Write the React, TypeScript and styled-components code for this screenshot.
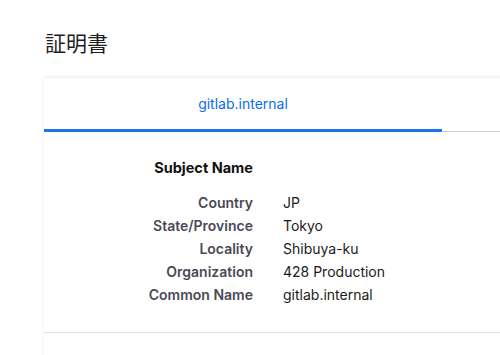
import React from 'react';
import styled, { createGlobalStyle } from 'styled-components';

const GlobalStyle = createGlobalStyle`
  html, body {
    margin: 0;
    padding: 0;
    background: #ffffff;
    overflow: hidden;
    font-family: Inter, "Noto Sans", "Noto Sans CJK JP", sans-serif;
    -webkit-font-smoothing: antialiased;
  }
`;

const Page = styled.div`
  padding: 29px 0 0 44px;
  width: 456px;
  height: 326px;
  overflow: hidden;
`;

const Title = styled.h1`
  margin: 0 0 22px 1px;
  font-family: "Noto Sans CJK JP", "Noto Sans", sans-serif;
  font-size: 21px;
  font-weight: 400;
  line-height: 26px;
  color: #1e1e1e;
`;

const Card = styled.div`
  width: 520px;
  height: 300px;
  background: #ffffff;
  box-shadow: 0 0 3px rgba(0, 0, 0, 0.08);
  border-top: 1px solid #f4f4f4;
`;

const TabBar = styled.div`
  display: flex;
  height: 53px;
  border-bottom: 1px solid #d0d0d0;
`;

const Tab = styled.div<{ $active?: boolean }>`
  width: 398px;
  display: flex;
  align-items: center;
  justify-content: center;
  font-size: 14px;
  color: #0a6cf0;
  margin-bottom: -1px;
  border-bottom: 3px solid ${p => (p.$active ? '#1a73f0' : 'transparent')};
`;

const Body = styled.div`
  padding: 26px 0 28px;
  border-bottom: 1px solid #e0e0e0;
`;

const Grid = styled.div`
  display: grid;
  grid-template-columns: 209px auto;
  column-gap: 30px;
  row-gap: 4px;
  font-size: 14px;
  line-height: 19px;
`;

const Heading = styled.div`
  text-align: right;
  font-weight: 700;
  font-size: 14.5px;
  color: #111111;
  margin-bottom: 12px;
`;

const Label = styled.div`
  text-align: right;
  font-weight: 600;
  color: #4a4a55;
`;

const Value = styled.div`
  color: #1a1a1a;
`;

const rows: [string, string][] = [
  ['Country', 'JP'],
  ['State/Province', 'Tokyo'],
  ['Locality', 'Shibuya-ku'],
  ['Organization', '428 Production'],
  ['Common Name', 'gitlab.internal'],
];

export default function App() {
  return (
    <Page>
      <GlobalStyle />
      <Title>証明書</Title>
      <Card>
        <TabBar>
          <Tab $active>gitlab.internal</Tab>
        </TabBar>
        <Body>
          <Grid>
            <Heading>Subject Name</Heading>
            <div />
            {rows.map(([k, v]) => (
              <React.Fragment key={k}>
                <Label>{k}</Label>
                <Value>{v}</Value>
              </React.Fragment>
            ))}
          </Grid>
        </Body>
      </Card>
    </Page>
  );
}
